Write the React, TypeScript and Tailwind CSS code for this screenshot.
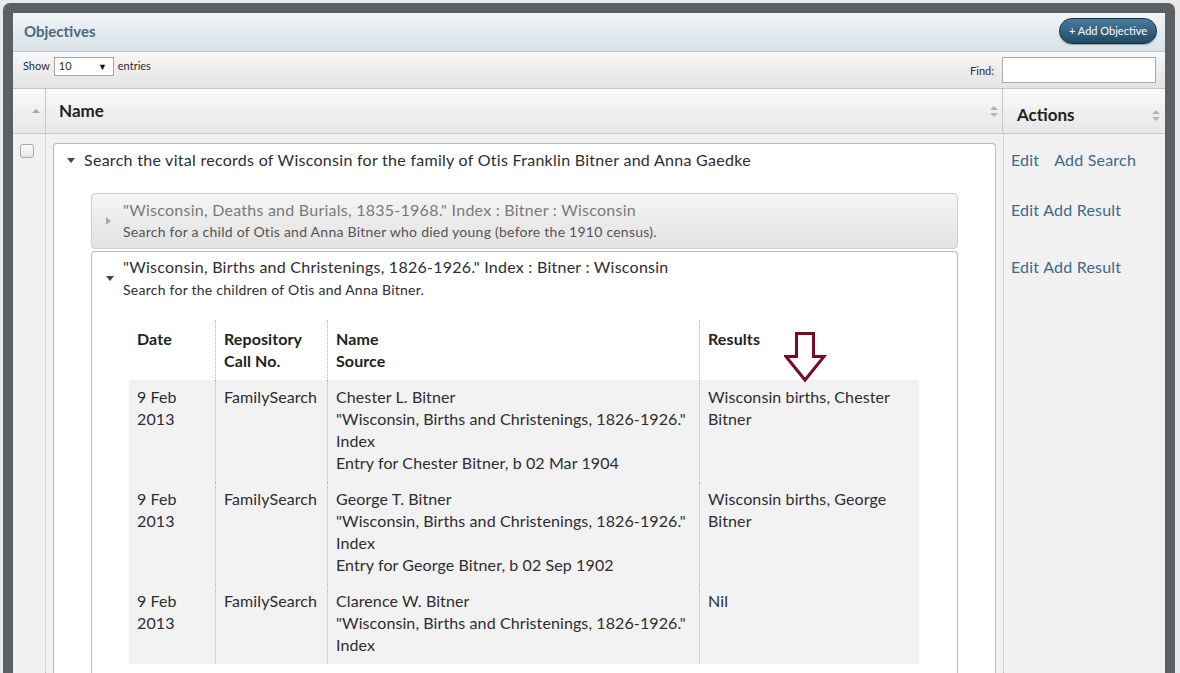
import React from 'react'

const font = { fontFamily: 'Lato, "Open Sans", sans-serif' }

const rows = [
  {
    date: ['9 Feb', '2013'],
    repo: 'FamilySearch',
    source: [
      'Chester L. Bitner',
      '"Wisconsin, Births and Christenings, 1826-1926."',
      'Index',
      'Entry for Chester Bitner, b 02 Mar 1904',
    ],
    result: ['Wisconsin births, Chester', 'Bitner'],
  },
  {
    date: ['9 Feb', '2013'],
    repo: 'FamilySearch',
    source: [
      'George T. Bitner',
      '"Wisconsin, Births and Christenings, 1826-1926."',
      'Index',
      'Entry for George Bitner, b 02 Sep 1902',
    ],
    result: ['Wisconsin births, George', 'Bitner'],
  },
  {
    date: ['9 Feb', '2013'],
    repo: 'FamilySearch',
    source: ['Clarence W. Bitner', '"Wisconsin, Births and Christenings, 1826-1926."', 'Index'],
    result: ['Nil'],
  },
]

function SortBoth() {
  return (
    <svg width="8" height="11" viewBox="0 0 8 11" className="shrink-0">
      <path d="M4 0 L8 4 L0 4 Z" fill="#b5b5b5" />
      <path d="M0 7 L8 7 L4 11 Z" fill="#b5b5b5" />
    </svg>
  )
}

function TriDown({ color = '#444' }: { color?: string }) {
  return (
    <svg width="8" height="5" viewBox="0 0 8 5" className="shrink-0">
      <path d="M0 0 L8 0 L4 5 Z" fill={color} />
    </svg>
  )
}

function TriRight() {
  return (
    <svg width="5" height="8" viewBox="0 0 5 8" className="shrink-0">
      <path d="M0 0 L5 4 L0 8 Z" fill="#a8a8a8" />
    </svg>
  )
}

function Arrow() {
  return (
    <svg width="44" height="52" viewBox="0 0 44 52" className="absolute left-[655px] top-[12px]">
      <path
        d="M12.5 1.5 H29.5 V24.5 H40 L21 48 L2 24.5 H12.5 Z"
        fill="none"
        stroke="#7d0a22"
        strokeWidth="3"
        strokeLinejoin="miter"
      />
    </svg>
  )
}

export default function App() {
  return (
    <div className="h-[673px] w-[1180px] overflow-hidden bg-[#e9e9e9] pt-[3px] pl-[3px] pr-[5px]" style={font}>
      <div className="h-[700px] rounded-[7px] bg-[#5b6064] px-[10px] pt-[10px]">
        <div className="h-full bg-[#f1f1f1] text-[#2d2d33]">
          {/* Title bar */}
          <div className="flex h-[39px] items-center justify-between border-b border-[#bfc7cc] bg-gradient-to-b from-[#f0f4f7] to-[#d8e2e8] pl-[11px] pr-[8px]">
            <h1 className="mt-[-2px] text-[15px] font-bold text-[#4d6a7c]">Objectives</h1>
            <button className="mt-[-2px] h-[26px] rounded-full border border-[#16303f] bg-gradient-to-b from-[#4a7c9c] to-[#1f4a66] px-[9px] text-[11px] text-white shadow-[0_1px_1px_rgba(0,0,0,0.3)]">
              + Add Objective
            </button>
          </div>

          {/* Toolbar */}
          <div className="flex h-[37px] items-start justify-between border-b border-[#c4c4c4] bg-gradient-to-b from-[#f8f8f8] to-[#e3e3e3] pl-[10px] pr-[9px]">
            <div className="mt-[5px] flex items-center gap-[4px] text-[11px]">
              <span>Show</span>
              <div className="flex h-[19px] w-[60px] items-center justify-between border border-[#a5a5a5] bg-white pl-[4px] pr-[6px]">
                <span>10</span>
                <span className="text-[9px] text-[#111]">▼</span>
              </div>
              <span>entries</span>
            </div>
            <div className="mt-[5px] flex items-center gap-[8px] text-[11px]">
              <span className="mt-[2px]">Find:</span>
              <div className="h-[26px] w-[154px] border border-[#aaa] bg-white" />
            </div>
          </div>

          {/* Header row */}
          <div className="flex h-[45px] border-b border-[#c8c8c8] bg-gradient-to-b from-[#fafafa] to-[#e7e7e7]">
            <div className="flex w-[33px] items-center justify-end border-r border-[#c8c8c8] pr-[5px]">
              <svg width="8" height="4" viewBox="0 0 8 4">
                <path d="M4 0 L8 4 L0 4 Z" fill="#a8a8a8" />
              </svg>
            </div>
            <div className="flex w-[957px] items-center justify-between border-r border-[#c8c8c8] pl-[13px] pr-[4px]">
              <span className="text-[17px] font-bold text-[#222]">Name</span>
              <SortBoth />
            </div>
            <div className="flex flex-1 items-center justify-between pl-[14px] pr-[5px] pt-[8px]">
              <span className="text-[17px] font-bold text-[#222]">Actions</span>
              <SortBoth />
            </div>
          </div>

          {/* Body row */}
          <div className="flex">
            <div className="w-[33px] shrink-0 border-r border-dotted border-[#bbb] pl-[7px] pt-[10px]">
              <div className="h-[14px] w-[14px] rounded-[3px] border border-[#a8a8a8] bg-gradient-to-b from-[#fdfdfd] to-[#e6e6e6]" />
            </div>
            <div className="w-[957px] shrink-0 pl-[7px] pr-[7px] pt-[9px]">
              <div className="h-[600px] rounded-t-[4px] border border-b-0 border-[#b9b9b9] bg-white">
                <div className="flex items-center pl-[13px] pt-[5px] text-[16px] leading-[22px] tracking-[0.28px]">
                  <TriDown />
                  <span className="ml-[9px]">
                    Search the vital records of Wisconsin for the family of Otis Franklin Bitner and Anna Gaedke
                  </span>
                </div>

                <div className="mx-[37px] mt-[22px] flex flex-col gap-[2px]">
                  {/* collapsed search */}
                  <div className="flex h-[56px] items-center rounded-[4px] border border-[#cfcfcf] bg-gradient-to-b from-[#f5f5f5] via-[#ececec] to-[#e2e2e2] pl-[14px]">
                    <TriRight />
                    <div className="ml-[12px] mt-[-1px] tracking-[0.25px]">
                      <div className="text-[16px] leading-[22px] text-[#7a7a7a]">
                        "Wisconsin, Deaths and Burials, 1835-1968." Index : Bitner : Wisconsin
                      </div>
                      <div className="text-[14px] leading-[21px] text-[#555]">
                        Search for a child of Otis and Anna Bitner who died young (before the 1910 census).
                      </div>
                    </div>
                  </div>

                  {/* expanded search */}
                  <div className="h-[500px] rounded-t-[4px] border border-b-0 border-[#b9b9b9] bg-white">
                    <div className="flex items-center pl-[14px] pt-[4px] tracking-[0.25px]">
                      <TriDown />
                      <div className="ml-[9px]">
                        <div className="text-[16px] leading-[22px]">
                          "Wisconsin, Births and Christenings, 1826-1926." Index : Bitner : Wisconsin
                        </div>
                        <div className="text-[14px] leading-[23px]">Search for the children of Otis and Anna Bitner.</div>
                      </div>
                    </div>

                    <div className="relative ml-[37px] mt-[19px] w-[790px] text-[16px] leading-[22px] tracking-[0.1px]">
                      <Arrow />
                      <div className="flex font-bold text-[#222]">
                        <div className="w-[87px] border-r border-dotted border-[#bbb] px-[8px] py-[8px]">Date</div>
                        <div className="w-[112px] border-r border-dotted border-[#bbb] px-[8px] py-[8px]">
                          Repository
                          <br />
                          Call No.
                        </div>
                        <div className="w-[372px] border-r border-dotted border-[#bbb] px-[8px] py-[8px]">
                          Name
                          <br />
                          Source
                        </div>
                        <div className="flex-1 px-[8px] py-[8px]">Results</div>
                      </div>
                      {rows.map((r, i) => (
                        <div key={i} className="flex bg-[#f2f2f2]">
                          <div className="w-[87px] border-r border-dotted border-[#bbb] px-[8px] pb-[8px] pt-[6px]">
                            {r.date.map((l) => (
                              <div key={l}>{l}</div>
                            ))}
                          </div>
                          <div className="w-[112px] border-r border-dotted border-[#bbb] px-[8px] pb-[8px] pt-[6px]">
                            {r.repo}
                          </div>
                          <div className="w-[372px] border-r border-dotted border-[#bbb] px-[8px] pb-[8px] pt-[6px]">
                            {r.source.map((l) => (
                              <div key={l} className="whitespace-nowrap">
                                {l}
                              </div>
                            ))}
                          </div>
                          <div className="flex-1 px-[8px] pb-[8px] pt-[6px]">
                            {r.result.map((l) => (
                              <div key={l}>{l}</div>
                            ))}
                          </div>
                        </div>
                      ))}
                    </div>
                  </div>
                </div>
              </div>
            </div>
            <div className="flex-1 border-l border-dotted border-[#bbb] pl-[7px] pt-[15px] text-[16px] leading-[22px] tracking-[0.2px] text-[#3a6a8c]">
              <div className="flex gap-[15px]">
                <span>Edit</span>
                <span>Add Search</span>
              </div>
              <div className="mt-[28px] flex gap-[4px]">
                <span>Edit</span>
                <span>Add Result</span>
              </div>
              <div className="mt-[35px] flex gap-[4px]">
                <span>Edit</span>
                <span>Add Result</span>
              </div>
            </div>
          </div>
        </div>
      </div>
    </div>
  )
}
